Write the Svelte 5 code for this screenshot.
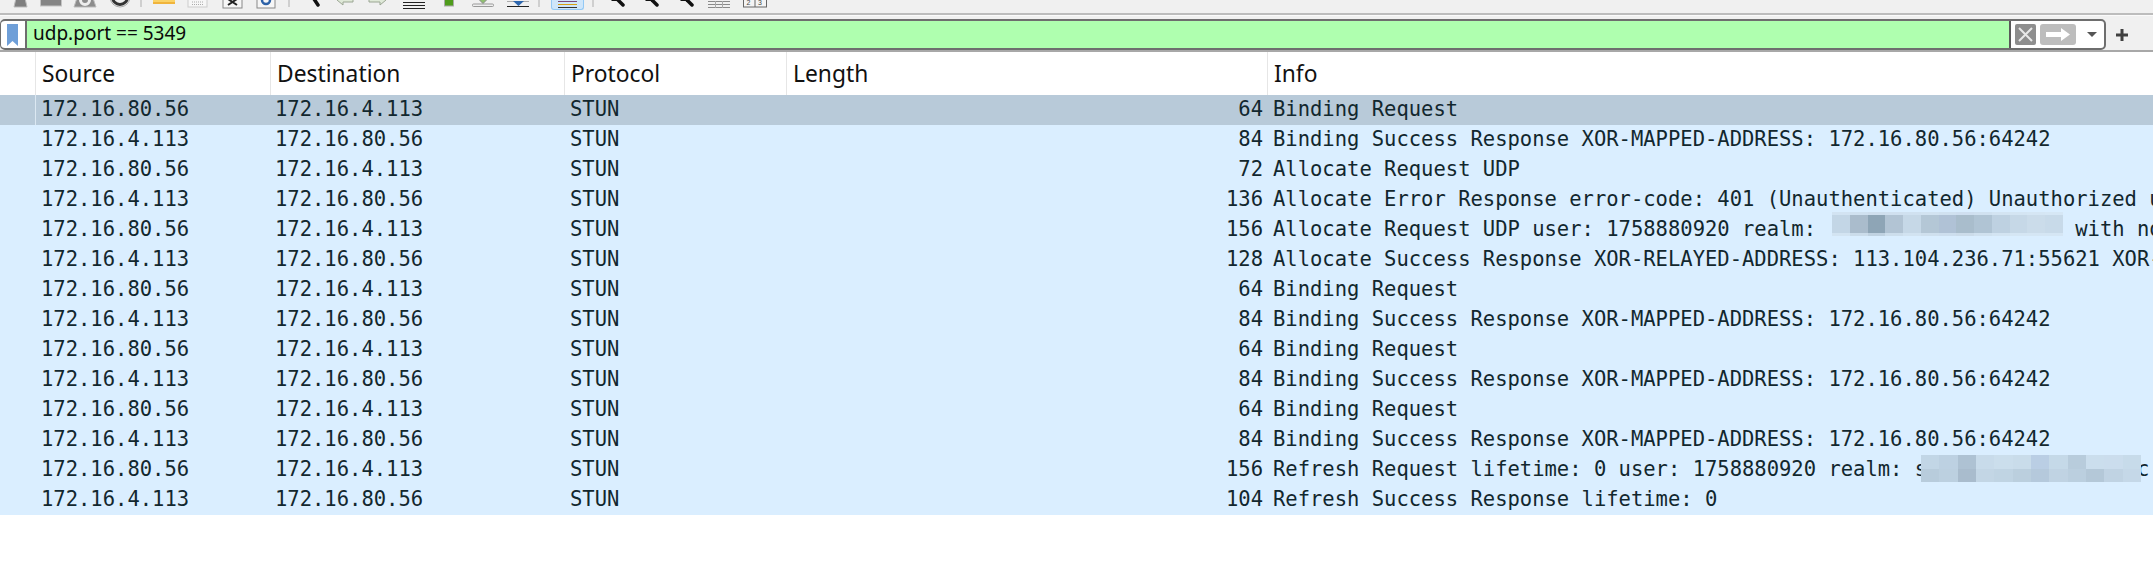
<script>
  const headers = ['', 'Source', 'Destination', 'Protocol', 'Length', 'Info'];
  const A = '172.16.80.56';
  const B = '172.16.4.113';
  const mapped = 'Binding Success Response XOR-MAPPED-ADDRESS: 172.16.80.56:64242';

  const packets = [
    [A, B, 64, 'Binding Request'],
    [B, A, 84, mapped],
    [A, B, 72, 'Allocate Request UDP'],
    [B, A, 136, 'Allocate Error Response error-code: 401 (Unauthenticated) Unauthorized user'],
    [A, B, 156, 'Allocate Request UDP user: 1758880920 realm:                     with nonce'],
    [B, A, 128, 'Allocate Success Response XOR-RELAYED-ADDRESS: 113.104.236.71:55621 XOR-MAPPED-ADDRESS'],
    [A, B, 64, 'Binding Request'],
    [B, A, 84, mapped],
    [A, B, 64, 'Binding Request'],
    [B, A, 84, mapped],
    [A, B, 64, 'Binding Request'],
    [B, A, 84, mapped],
    [A, B, 156, 'Refresh Request lifetime: 0 user: 1758880920 realm: s                 c'],
    [B, A, 104, 'Refresh Success Response lifetime: 0']
  ];

  // pixelated bits of the realm that were censored in the capture
  const masks = {
    4: {
      cls: 'mask-a',
      tiles: [
        ['#d2e3f2','#d0e1f0','#cfdfee','#d0e0ef','#d0e1f0','#d2e3f1','#d0e1f0','#cfdff0','#d0e1f0','#d3e4f2','#d4e5f3','#d5e6f4','#d6e7f5'],
        ['#c3d6e6','#aabccc','#8ea5b6','#b2c4d4','#c6d8e7','#b4c7d6','#b0c2d6','#a9bdcc','#b0c4d4','#bed1e1','#c6d8e7','#cbdcea','#c8dae9'],
        ['#d3e4f2','#cbdcea','#c0d2e1','#cddeec','#d2e3f1','#cfe0ee','#cddeee','#ccdcea','#d0e1ef','#d3e4f2','#d5e6f4','#d5e6f4','#d5e6f4']
      ]
    },
    12: {
      cls: 'mask-b',
      tiles: [
        ['#c2d6e6','#bdd1e2','#aec2d3','#c8dbea','#cbdeec','#c9dcea','#bacee4','#c5d9e8','#b8ccdc','#cbdeed','#cbdded','#c7dbea'],
        ['#b8ccdc','#bcd0e0','#a9bccd','#c3d6e5','#c0d4e3','#bbcfde','#b5c9dc','#c0d3e3','#bbcfdf','#b4c8d8','#c0d3e3','#c5d8e8']
      ]
    }
  };
</script>

<div class="page">
  <div class="toolbar">
    <svg class="ic" viewBox="0 0 22 14"><path d="M11 -2h9l2 9H9z" fill="#7f7f7f" stroke="#bbb"/></svg>
    <svg class="ic" viewBox="0 0 22 14"><rect x="0.5" y="-4" width="21" height="10" fill="#858585" stroke="#c4c4c4"/></svg>
    <svg class="ic" viewBox="0 0 22 14"><path d="M3 -2h16l3 9H0z" fill="#8c8c8c" stroke="#bbb"/><circle cx="11" cy="0" r="4.5" fill="none" stroke="#eee" stroke-width="3"/></svg>
    <svg class="ic" viewBox="0 0 22 14"><circle cx="11" cy="-3" r="10" fill="#eee" stroke="#aaa"/><circle cx="11" cy="-3" r="7.5" fill="#eee" stroke="#333" stroke-width="3"/></svg>
    <span class="sep"></span>
    <svg class="ic" viewBox="0 0 22 14"><rect y="-3" width="22" height="6" fill="#fad266"/><rect y="2" width="22" height="2" fill="#f0b43c"/></svg>
    <svg class="ic" viewBox="0 0 22 14"><rect x="1" y="-3" width="19" height="10" fill="#f6f6f6" stroke="#ccc"/><path d="M5 2h11M5 4.500h11" stroke="#aaa" stroke-dasharray="1 1"/></svg>
    <svg class="ic" viewBox="0 0 22 14"><rect x="1" y="-3" width="19" height="11" fill="#f6f6f6" stroke="#888"/><path d="M6 -1l9 6M15 -1l-9 6" stroke="#222" stroke-width="2"/></svg>
    <svg class="ic" viewBox="0 0 22 14"><rect x="1" y="-3" width="18" height="11" fill="#f6f6f6" stroke="#888"/><circle cx="10" cy="0" r="4" fill="none" stroke="#2d62a8" stroke-width="2.500"/></svg>
    <span class="sep"></span>
    <div class="group narrow">
      <svg class="ic" viewBox="0 0 22 14"><path d="M10 -1l4 6" stroke="#111" stroke-width="3.500" stroke-linecap="round"/></svg>
      <svg class="ic" viewBox="0 0 22 14"><path d="M2 0l6 5 0-3h10v-4H2z" fill="#dfe9d8" stroke="#9aa593"/></svg>
      <svg class="ic" viewBox="0 0 22 14"><path d="M20 0l-6 5 0-3H3v-4h17z" fill="#dfe9d8" stroke="#9aa593"/></svg>
    </div>
    <div class="group wide">
      <svg class="ic" viewBox="0 0 22 14"><path d="M0 2.500h22M0 5.500h22M0 8.500h22" stroke="#222"/></svg>
      <svg class="ic" viewBox="0 0 22 14"><rect x="6.500" y="-3" width="9" height="9" fill="#4f9c1c" stroke="#aaa"/></svg>
      <svg class="ic" viewBox="0 0 22 14"><rect x="0.500" y="4" width="21" height="2.500" rx="1" fill="#eee" stroke="#999"/><path d="M11 3.500l-4-4h8z" fill="#8fc070" stroke="#888"/></svg>
      <svg class="ic" viewBox="0 0 22 14"><path d="M0 1.500h22" stroke="#aaa"/><path d="M0 6.500h22" stroke="#222"/><path d="M6 1h11l-5.500 5z" fill="#2d66ad"/></svg>
    </div>
    <span class="sep"></span>
    <div class="active">
      <span class="ln purple"></span>
      <span class="ln amber"></span>
      <span class="ln dark"></span>
    </div>
    <span class="sep"></span>
    <svg class="ic" viewBox="0 0 22 14"><path d="M13 0l5 5" stroke="#111" stroke-width="3.500" stroke-linecap="round"/><path d="M5 -1h7l1 2H7z" fill="#111"/></svg>
    <svg class="ic" viewBox="0 0 22 14"><path d="M13 0l5 5" stroke="#111" stroke-width="3.500" stroke-linecap="round"/><path d="M5 -1h7l1 2H7z" fill="#111"/></svg>
    <svg class="ic" viewBox="0 0 22 14"><path d="M13 0l5 5" stroke="#111" stroke-width="3.500" stroke-linecap="round"/><path d="M5 -1h7l1 2H7z" fill="#111"/></svg>
    <svg class="ic" viewBox="0 0 22 14"><path d="M0 1.500h22M0 4.500h22M0 7.500h22" stroke="#8a8a8a"/><path d="M7.500 1v7M14.500 1v7" stroke="#aaa"/></svg>
    <svg class="ic cols" viewBox="0 0 24 14"><rect x="0.500" y="-3" width="23" height="10" fill="#f4f4f4" stroke="#666"/><path d="M12 -3v10" stroke="#666"/><text x="3.500" y="5" font-size="7" font-family="Liberation Sans" fill="#444">2</text><text x="15" y="5" font-size="7" font-family="Liberation Sans" fill="#444">3</text></svg>
  </div>

  <div class="filterbar">
    <div class="filter">
      <div class="bookmark">
        <svg width="12" height="22" viewBox="0 0 12 22"><path d="M0 0h11v22l-5.500-5L0 22z" fill="#6f9fd8"/></svg>
      </div>
      <div class="expr">udp.port == 5349</div>
      <div class="actions">
        <span class="clear">
          <svg width="21" height="21" viewBox="0 0 21 21"><path d="M4 4l13 13M17 4L4 17" stroke="#e8e8e8" stroke-width="2"/></svg>
        </span>
        <span class="apply">
          <svg width="36" height="21" viewBox="0 0 36 21"><path d="M6 8h15V4l9 6.500-9 6.500v-4H6z" fill="#fff"/></svg>
        </span>
        <span class="caret"></span>
      </div>
    </div>
    <svg class="plus" width="12" height="12" viewBox="0 0 12 12"><path d="M6 0v12M0 6h12" stroke="#404040" stroke-width="3"/></svg>
  </div>

  <div class="row head">
    {#each headers as h}
      <div class="th">{h}</div>
    {/each}
  </div>

  {#each packets as p, i}
    <div class="row pkt" class:selected={i === 0}>
      <div class="mark"></div>
      <div class="td">{p[0]}</div>
      <div class="td dest">{p[1]}</div>
      <div class="td">STUN</div>
      <div class="td num">{p[2]}</div>
      <div class="td info">
        {p[3]}
        {#if masks[i]}
          <div class="mask {masks[i].cls}">
            {#each masks[i].tiles as line}
              <div class="mask-line">
                {#each line as c}
                  <span style="background:{c}"></span>
                {/each}
              </div>
            {/each}
          </div>
        {/if}
      </div>
    </div>
  {/each}
</div>

<style>
  :global(body) {
    margin: 0;
    background: #fff;
  }

  .page {
    width: 2153px;
    height: 575px;
    overflow: hidden;
    background: #fff;
  }

  /* toolbar, only the bottom of the icons is in frame */
  .toolbar {
    height: 13px;
    display: flex;
    align-items: flex-start;
    gap: 12.5px;
    padding-left: 5px;
    background: #f0f0f0;
    border-bottom: 2px solid #bcbcbc;
    overflow: hidden;
  }

  .ic {
    width: 22px;
    height: 14px;
    flex: none;
    overflow: visible;
  }

  .cols {
    width: 24px;
  }

  .group {
    display: flex;
    flex: none;
  }

  .narrow {
    gap: 9px;
    margin-left: 4px;
  }

  .wide {
    gap: 12.5px;
    margin-left: 2.5px;
  }

  .sep {
    width: 2px;
    height: 7px;
    flex: none;
    margin: 0 -2px 0 -3px;
    background: #cfcfcf;
  }

  .active {
    width: 31px;
    height: 9px;
    flex: none;
    position: relative;
    background: #cfe6fa;
    border: 1px solid #93c9f5;
    border-top: 0;
    border-radius: 0 0 3px 3px;
    margin-right: -1px;
  }

  .ln {
    position: absolute;
    left: 6px;
    right: 6px;
    height: 1px;
  }

  .purple { top: 1px; background: #7a4a7a; }
  .amber { top: 4px; background: #d8a010; }
  .dark { top: 7px; background: #333; }

  /* display filter */
  .filterbar {
    height: 31px;
    display: flex;
    align-items: flex-start;
    padding-top: 3px;
    background: #f0f0f0;
    border-top: 1px solid #fafafa;
    border-bottom: 2px solid #a8a8a8;
  }

  .filter {
    width: 2106px;
    height: 31px;
    box-sizing: border-box;
    display: flex;
    border: 2px solid #6e6e6e;
    border-left-width: 1px;
    border-radius: 5px;
    background: #fff;
    overflow: hidden;
  }

  .bookmark {
    width: 24px;
    display: flex;
    align-items: center;
    justify-content: center;
    border-right: 2px solid #6e6e6e;
    flex: none;
  }

  .expr {
    flex: 1;
    padding-left: 6px;
    background: #afffaf;
    border-right: 2px solid #5a5a5a;
    color: #0a0a0a;
    font: 19px/25px "Noto Sans", sans-serif;
  }

  .actions {
    width: 93px;
    flex: none;
    display: flex;
    align-items: center;
    padding-left: 4px;
    box-sizing: border-box;
  }

  .clear {
    width: 21px;
    height: 21px;
    display: block;
    background: #8e8e8e;
    border-radius: 2px;
  }

  .apply {
    width: 36px;
    height: 21px;
    display: block;
    margin-left: 4px;
    background: #bdbdbd;
    border-radius: 3px;
  }

  .caret {
    margin-left: 11px;
    border-left: 5px solid transparent;
    border-right: 5px solid transparent;
    border-top: 5px solid #555;
  }

  .plus {
    margin: 10px 0 0 10px;
  }

  /* packet list */
  .row {
    display: grid;
    grid-template-columns: 36px 235px 294px 222px 481px 1fr;
    white-space: nowrap;
  }

  .head {
    height: 43px;
  }

  .th {
    padding-left: 6px;
    border-right: 1px solid #e6e6e6;
    color: #111;
    font: 22.8px/43px "Noto Sans", sans-serif;
  }

  .th:first-child {
    padding-left: 0;
  }

  .th:last-child {
    border-right: 0;
  }

  .pkt {
    height: 30px;
    background: #daeeff;
    color: #12272e;
    font: 20.5px/28px "DejaVu Sans Mono", monospace;
  }

  .pkt.selected {
    background: #b8cad9;
  }

  .selected .mark {
    border-right: 1px solid #dce8f2;
  }

  .td {
    padding-left: 5px;
    overflow: hidden;
  }

  .dest {
    padding-left: 4px;
  }

  .num {
    padding: 0 5px 0 0;
    text-align: right;
  }

  .info {
    position: relative;
    white-space: pre;
    overflow: visible;
  }

  .mask {
    position: absolute;
    display: flex;
    flex-direction: column;
  }

  .mask-line {
    display: flex;
    flex: 1;
  }

  .mask-line span {
    flex: 1;
  }

  .mask-a {
    left: 564px;
    top: -3px;
    width: 231px;
    height: 24px;
  }

  .mask-a .mask-line:nth-child(1),
  .mask-a .mask-line:nth-child(3) {
    flex: 0 0 3px;
  }

  .mask-b {
    left: 653px;
    top: 0;
    width: 220px;
    height: 27px;
  }
</style>
